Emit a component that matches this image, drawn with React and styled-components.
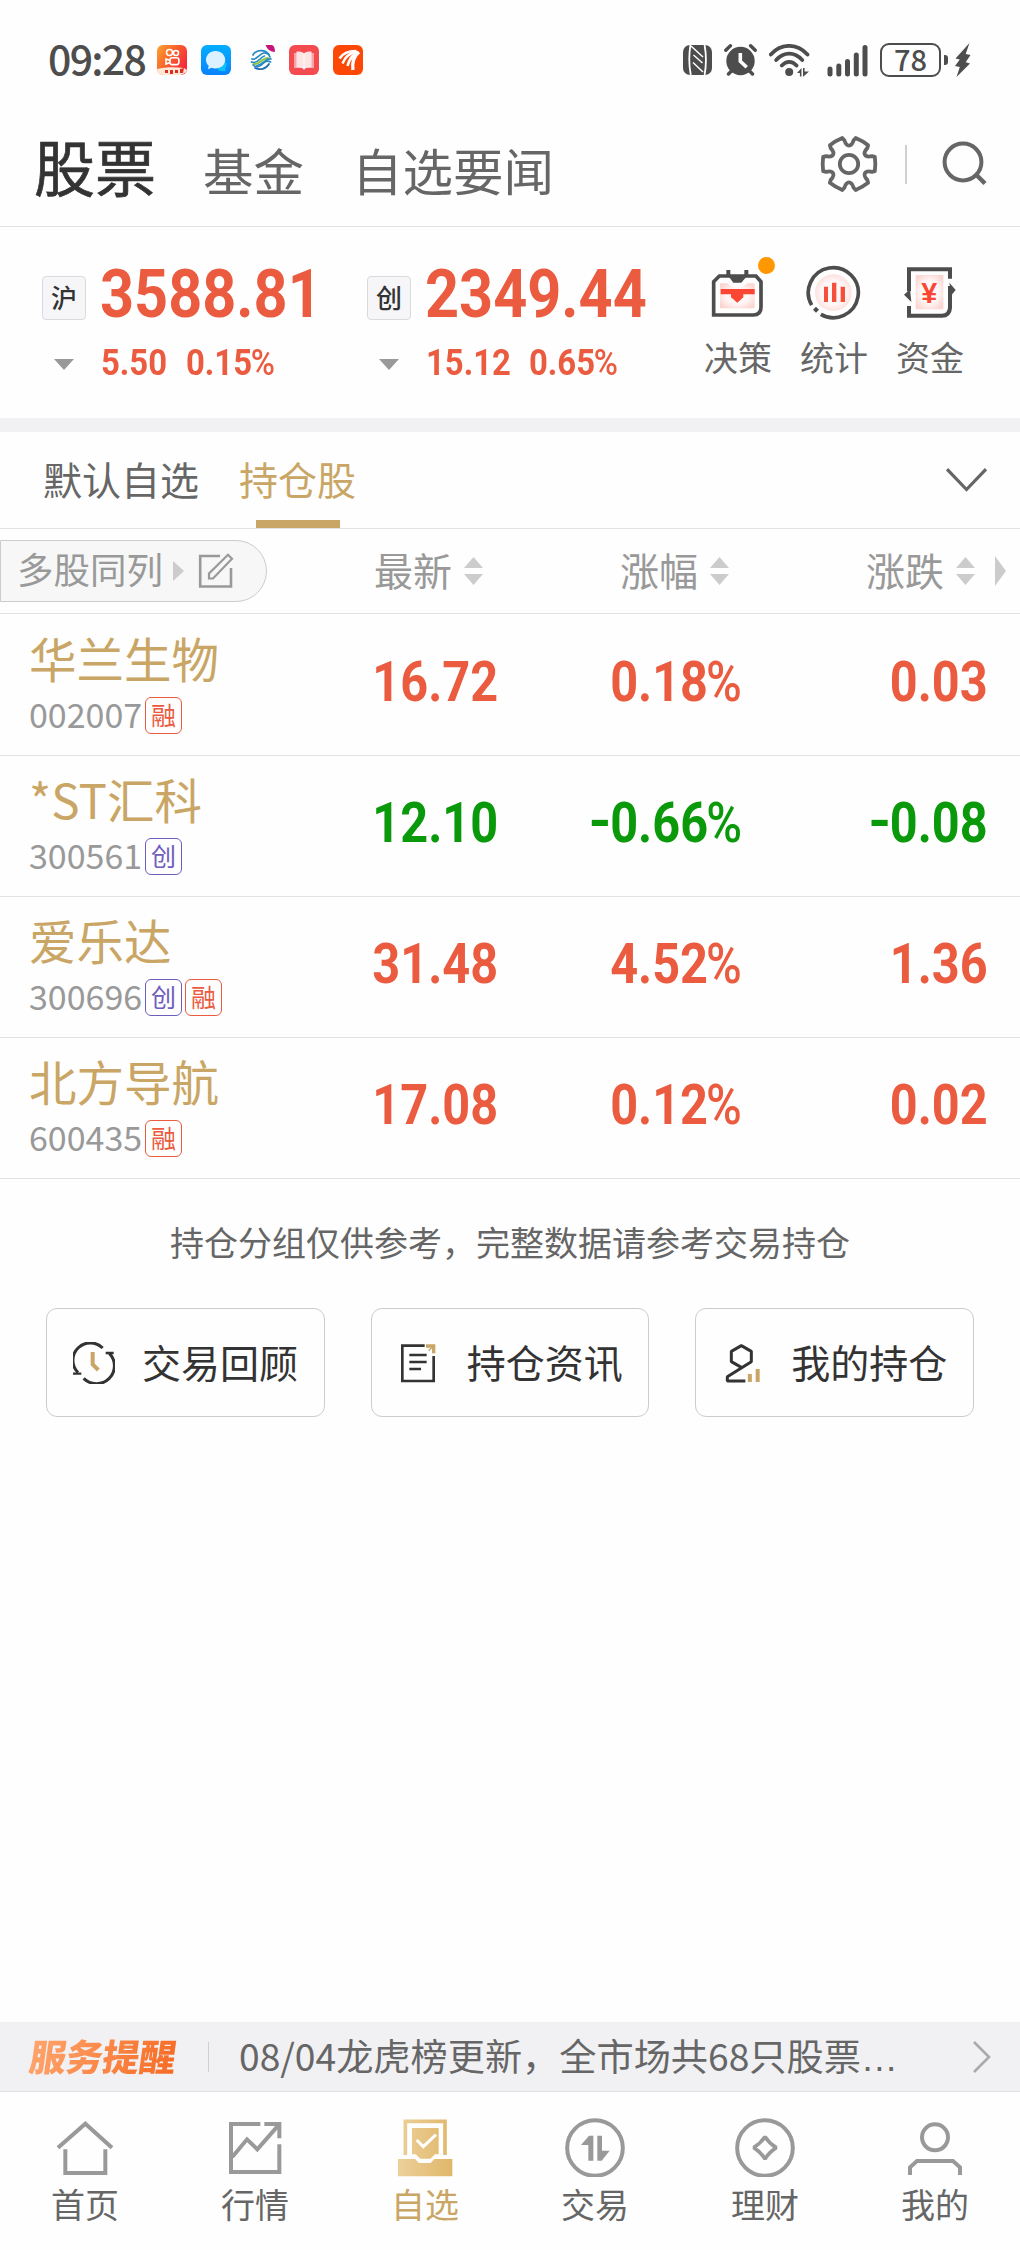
import styled, { createGlobalStyle } from "styled-components";

const colors = {
  black: "#333333",
  darkGray: "#666666",
  gray: "#999999",
  lightGray: "#cccccc",
  line: "#e2e2e2",
  band: "#f1f1f4",
  gold: "#c9a665",
  red: "#ea5b3f",
  green: "#0a990a",
  purple: "#6f5dbd",
  status: "#4d4d4d",
};

const GlobalStyle = createGlobalStyle`
  * {
    box-sizing: border-box;
  }

  body {
    margin: 0;
    background: #fefefe;
    font-family: "Noto Sans CJK SC", sans-serif;
  }

  svg {
    display: block;
    flex: none;
  }
`;

const Page = styled.div`
  display: flex;
  flex-direction: column;
  width: 1020px;
  height: 2250px;
  background: #fefefe;
  overflow: hidden;
  white-space: nowrap;
`;

/* status bar */

const StatusBar = styled.div`
  display: flex;
  align-items: center;
  height: 120px;
  padding: 0 49px 0 48px;
  color: ${colors.status};
`;

const Time = styled.span`
  width: 109px;
  font-size: 41px;
  font-weight: 500;
  line-height: 60px;
  letter-spacing: -1.7px;
  margin-top: -7px;
`;

const AppIcons = styled.div`
  display: flex;
  gap: 14px;
  flex: 1;
`;

const StatusIcons = styled.div`
  display: flex;
  align-items: center;
`;

const StatusIcon = styled.div`
  margin-right: ${({ $gap }) => $gap}px;
`;

const Battery = styled.div`
  width: 61px;
  height: 34px;
  border: 2px solid ${colors.status};
  border-radius: 9px;
  font-size: 29px;
  font-weight: 500;
  line-height: 26px;
  text-align: center;
`;

const BatteryTip = styled.div`
  width: 4px;
  height: 10px;
  margin: 0 7px 0 3px;
  border-radius: 0 3px 3px 0;
  background: ${colors.status};
`;

/* page header */

const Header = styled.header`
  display: flex;
  align-items: center;
  height: 107px;
  padding: 0 32px 0 34px;
  border-bottom: 1px solid ${colors.line};
`;

const HeaderTitle = styled.h1`
  margin: -14px 47px 0 0;
  color: ${colors.black};
  font-size: 61px;
  font-weight: 400;
  line-height: 80px;
  -webkit-text-stroke: 0.7px ${colors.black};
`;

const HeaderTab = styled.span`
  margin: -8px 48px 0 0;
  color: ${colors.darkGray};
  font-size: 50.5px;
  line-height: 80px;
`;

const HeaderTools = styled.div`
  display: flex;
  align-items: center;
  margin: -18px 0 0 auto;
`;

const Divider = styled.div`
  width: ${({ $width }) => $width}px;
  height: ${({ $height }) => $height}px;
  margin: ${({ $margin }) => $margin};
  background: #cfcfcf;
`;

/* indexes */

const IndexSection = styled.section`
  display: flex;
  height: 205px;
  padding-left: 42px;
  border-bottom: 14px solid ${colors.band};
`;

const IndexItem = styled.div`
  width: 325px;
  padding-top: 41px;
`;

const IndexRow = styled.div`
  display: flex;
  align-items: center;
  height: ${({ $height }) => $height}px;
`;

const IndexBadge = styled.span`
  width: 44px;
  height: 44px;
  margin: 6px 14px 0 0;
  border: 1px solid #dadade;
  border-radius: 4px;
  background: #f6f6f9;
  color: ${colors.black};
  font-size: 26px;
  font-weight: 500;
  line-height: 39px;
  text-align: center;
`;

const Digits = styled.span`
  display: inline-block;
  color: ${({ $color }) => $color || colors.red};
  font-family: Roboto, sans-serif;
  font-size: ${({ $size }) => $size}px;
  font-weight: 700;
  line-height: 1;
  transform: scaleX(${({ $scale }) => $scale || 0.9});
  transform-origin: ${({ $origin }) => $origin || "left"} center;
`;

const Minus = styled.span`
  display: inline-block;
  margin-right: -0.03em;
  transform: translateY(-0.03em) scaleX(1.2);
  transform-origin: right center;
`;

const Percent = styled.span`
  margin-left: -0.04em;
  font-weight: 500;
`;

const IndexChange = styled.div`
  width: ${({ $width }) => $width}px;
`;

const Triangle = styled.div`
  width: 20px;
  height: 11px;
  margin: 2px 27px 0 12px;
  background: ${colors.gray};
  clip-path: polygon(0 0, 100% 0, 50% 100%);
`;

const Shortcuts = styled.div`
  display: flex;
  margin-left: -2px;
  padding-top: 35px;
`;

const Shortcut = styled.div`
  display: flex;
  flex-direction: column;
  align-items: center;
  width: 96px;
  color: ${colors.darkGray};
  font-size: 34px;
  line-height: 40px;
`;

const ShortcutIcon = styled.div`
  position: relative;
  margin-bottom: 15px;
`;

const AlertDot = styled.div`
  position: absolute;
  top: -5px;
  left: 50px;
  width: 17px;
  height: 17px;
  border-radius: 50%;
  background: #ff9800;
`;

/* groups */

const Groups = styled.div`
  display: flex;
  height: 97px;
  padding: 0 33px 0 43px;
  border-bottom: 1px solid ${colors.line};
`;

const Group = styled.div`
  display: flex;
  flex-direction: column;
  align-items: center;
  justify-content: space-between;
  margin-right: 40px;
  color: ${({ $active }) => ($active ? colors.gold : colors.darkGray)};
  font-size: 39px;
  line-height: 92px;

  &::after {
    content: "";
    width: 84px;
    height: 8px;
    margin-top: -4px;
    background: ${({ $active }) => ($active ? colors.gold : "transparent")};
  }
`;

const GroupArrow = styled.div`
  margin: 36px 0 0 auto;
`;

/* table */

const TableHead = styled.div`
  display: grid;
  grid-template-columns: 483px 246px 246px 31px;
  align-items: center;
  height: 85px;
  border-bottom: 1px solid ${colors.line};
`;

const HeadFirst = styled.div`
  display: flex;
  align-items: center;
  justify-content: space-between;
`;

const Pill = styled.div`
  display: flex;
  align-items: center;
  width: 267px;
  height: 62px;
  padding-left: 16px;
  border: 1px solid ${colors.lightGray};
  border-radius: 0 31px 31px 0;
  background: #f7f7f7;
  color: ${colors.gray};
  font-size: 36.5px;
  line-height: 58px;
`;

const PillText = styled.span`
  margin-top: -4px;
`;

const ArrowRight = styled.div`
  width: 11px;
  height: ${({ $height }) => $height}px;
  margin: ${({ $margin }) => $margin};
  background: ${colors.lightGray};
  clip-path: polygon(0 0, 100% 50%, 0 100%);
`;

const ColumnTitle = styled.div`
  display: flex;
  align-items: center;
  justify-content: flex-end;
  gap: 12px;
  color: ${colors.gray};
  font-size: 39px;
  line-height: 50px;
`;

const ColumnText = styled.span`
  margin-top: -4px;
`;

const StockList = styled.div`
  padding-top: 1px;
`;

const StockRow = styled.div`
  display: grid;
  grid-template-columns: 1fr 244px 246px;
  height: 141px;
  padding: 0 32px 0 29px;
  border-bottom: 1px solid ${colors.line};
`;

const StockFirst = styled.div`
  display: flex;
  align-items: flex-start;
  justify-content: space-between;
`;

const StockName = styled.div`
  margin-top: 13px;
  color: ${colors.gold};
  font-size: 47.5px;
  line-height: 60px;
`;

const StockCode = styled.div`
  display: flex;
  align-items: center;
  height: 37px;
  margin-top: 9px;
  color: ${colors.gray};
  font-size: 34px;
  line-height: 37px;
`;

const CodeText = styled.span`
  width: 116px;
  margin-top: -4px;
`;

const Tag = styled.span`
  width: 37px;
  height: 37px;
  margin-right: 3px;
  border: 1.5px solid ${({ $color }) => $color};
  border-radius: 6px;
  color: ${({ $color }) => $color};
  font-size: 25px;
  line-height: 32px;
  text-align: center;
`;

const Value = styled.div`
  height: 140px;
  padding-top: 40px;
  text-align: right;
`;

/* holdings actions */

const Note = styled.p`
  margin: 41px 0 0;
  color: ${colors.darkGray};
  font-size: 34px;
  line-height: 44px;
  text-align: center;
`;

const Actions = styled.div`
  display: grid;
  grid-template-columns: repeat(3, 1fr);
  gap: 46px;
  margin-top: 44px;
  padding: 0 46px;
`;

const Action = styled.div`
  display: flex;
  align-items: center;
  height: 109px;
  padding-left: 26px;
  border: 1px solid ${colors.lightGray};
  border-radius: 11px;
  color: ${colors.black};
  font-size: 39px;
  line-height: 50px;
`;

const ActionText = styled.span`
  margin: -4px 0 0 27px;
`;

/* bottom */

const Service = styled.div`
  display: flex;
  align-items: center;
  height: 70px;
  margin-top: auto;
  padding: 0 29px;
  border-bottom: 1px solid #e0e0e2;
  background: ${colors.band};
  color: ${colors.darkGray};
  font-size: 37.2px;
  line-height: 60px;
`;

const ServiceLogo = styled.span`
  width: 147px;
  margin: -4px 0 0 1px;
  background: linear-gradient(100deg, #ffa66e, #f66a22);
  background-clip: text;
  -webkit-background-clip: text;
  color: transparent;
  font-size: 37px;
  font-weight: 900;
  letter-spacing: -0.5px;
  transform: skewX(-8deg);
`;

const ServiceText = styled.span`
  flex: 1;
  margin-top: -1px;
`;

const Ellipsis = styled.span`
  font-family: "Liberation Sans", sans-serif;
`;

const Nav = styled.nav`
  display: grid;
  grid-template-columns: repeat(6, 1fr);
  height: 158px;
  padding-top: 25px;
`;

const NavItem = styled.div`
  display: flex;
  flex-direction: column;
  align-items: center;
  gap: 7px;
  color: ${({ $active }) => ($active ? colors.gold : colors.darkGray)};
  font-size: 34px;
  line-height: 40px;
`;

const Icon = ({ size = 60, box = 180, children, ...rest }) => (
  <svg
    width={size}
    height={size}
    viewBox={`0 0 ${box} ${box}`}
    fill="none"
    {...rest}
  >
    {children}
  </svg>
);

const NfcIcon = () => (
  <svg width="29" height="30" viewBox="0 0 29 30" fill="none">
    <rect width="29" height="30" rx="7" fill={colors.status} />
    <path
      d="M7.4 0C6 9 6 21 7.8 30M21.6 0c1.6 9 1.6 21 0 30"
      stroke="#fefefe"
      strokeWidth="1.8"
    />
    <path
      d="M8 1L20 12M10.5 10L19.5 18M10 17.5L20 27"
      stroke="#fefefe"
      strokeWidth="1.5"
    />
  </svg>
);

const AlarmIcon = () => (
  <svg width="33" height="32" viewBox="0 0 33 32" fill="none">
    <circle cx="16.5" cy="17" r="14.2" fill={colors.status} />
    <path
      d="M1.8 6.2l4.6-4.4M31.2 6.2l-4.6-4.4M4.5 30l3-3M28.5 30l-3-3"
      stroke={colors.status}
      strokeWidth="3.4"
      strokeLinecap="round"
    />
    <path d="M16.3 9v8.2l6.4 6" stroke="#fefefe" strokeWidth="3.6" />
  </svg>
);

const WifiIcon = () => (
  <svg width="41" height="33" viewBox="0 0 41 33" fill="none">
    <path
      d="M1.8 10.5C12 -1 28 -1 38.5 10.5M7.2 16C15 7.6 25.5 7.6 33.2 16M12.8 21.5C17.5 16.6 23 16.6 27.5 21.5"
      stroke={colors.status}
      strokeWidth="3.8"
      strokeLinecap="round"
    />
    <circle cx="20.2" cy="28" r="4" fill={colors.status} />
    <path
      d="M28 29l4.5-5v8.5h-1.6V29zM34 24h1.6v3.5H40L34.5 32.5H34z"
      fill={colors.status}
    />
  </svg>
);

const SignalIcon = () => (
  <svg width="41" height="33" viewBox="0 0 41 33" fill={colors.status}>
    <rect x="0.5" y="22.5" width="5" height="10" rx="2.5" />
    <rect x="9.3" y="19.5" width="5" height="13" rx="2.5" />
    <rect x="18" y="15" width="5" height="17.5" rx="2.5" />
    <rect x="26.8" y="8.5" width="5" height="24" rx="2.5" />
    <rect x="35.5" y="1" width="5" height="31.5" rx="2.5" />
  </svg>
);

const BoltIcon = () => (
  <svg width="16" height="34" viewBox="0 0 16 34">
    <path
      d="M14.5 0L.5 15.500l4.300 1L0 23l4.800 1L1.500 34 15 20.500l-4.300-1.300L15.500 12l-4.800-1z"
      fill={colors.status}
    />
  </svg>
);

const KuaishouIcon = () => (
  <Icon size={30} box={30}>
    <defs>
      <linearGradient id="ks" x1="0" y1="0" x2="1" y2="0.6">
        <stop offset="0" stopColor="#fba42e" />
        <stop offset="0.5" stopColor="#f9622c" />
        <stop offset="1" stopColor="#f5283c" />
      </linearGradient>
    </defs>
    <rect width="30" height="30" rx="6" fill="url(#ks)" />
    <g stroke="#fff" strokeWidth="1.6">
      <circle cx="12.5" cy="7.5" r="3" />
      <circle cx="19" cy="8" r="2.5" />
      <rect x="13" y="12.8" width="8.8" height="6.8" rx="2" />
      <path d="M13 15.5l-4-1.5v5l4-1.5" />
    </g>
    <path d="M0 24c8-2 18-2 27-1l3 2-2 3-4 2H6c-4 0-6-3-6-6z" fill="#ffe6d5" />
    <path
      d="M8 25h3v3H8zM13 25h3v4h-3zM18 25h3v3h-3zM23 24l4-1-1 5h-3z"
      fill="#e02c20"
    />
  </Icon>
);

const MessageIcon = () => (
  <Icon size={30} box={30}>
    <defs>
      <linearGradient id="msg" x1="0" y1="0" x2="0" y2="1">
        <stop offset="0" stopColor="#04aeff" />
        <stop offset="1" stopColor="#0a82fb" />
      </linearGradient>
    </defs>
    <rect width="30" height="30" rx="6" fill="url(#msg)" />
    <path d="M25 17c1 3 .5 5-1 6.5l1 2.5c-4 .5-7 0-8.5-2z" fill="#0cc3f8" />
    <path
      d="M14.5 6C20 6 24.2 10 24.2 14.8S20 23.6 14.5 23.6c-1.5 0-3-.3-4-.8L7 24.2l.7-3.5C5.9 19.2 5 17 5 14.8 5 10 9 6 14.5 6z"
      fill="#dcf1ff"
    />
  </Icon>
);

const MobileIcon = () => (
  <Icon size={30} box={30}>
    <g strokeWidth="1.7" strokeLinecap="round">
      <path d="M8 10C11 4.5 20 4 24 9.5" stroke="#2589c4" />
      <path d="M7 14c4 2 8-6 12-6 3 0 5 1 6 4" stroke="#2589c4" />
      <path d="M6.5 17c6 3 9-5.5 13-6" stroke="#2589c4" />
      <path d="M9 19c5 1 8-6 14-6" stroke="#8cc541" strokeWidth="2.2" />
      <path d="M26 14c-6-1-8 6-14 6.5" stroke="#2589c4" />
      <path d="M8 20c3 3 7 2 10-1.5 2-2 5-3 7.5-1.5" stroke="#2589c4" />
      <path d="M10 23c5 2.5 11 1 14-4" stroke="#1f6cae" />
    </g>
    <path d="M20.5 0H27q3 1 3 7-7 0-9.5-7z" fill="#c4157c" />
  </Icon>
);

const BookIcon = () => (
  <Icon size={30} box={30}>
    <rect width="30" height="30" rx="6" fill="#f44b50" />
    <path d="M5 8h20v15H5z" fill="#f9a5a8" />
    <path
      d="M7.5 6.5c3 0 5.5 0 7.5 2 2-2 4.5-2 7.5-2v16c-3 0-5.5 0-7.5 2-2-2-4.5-2-7.5-2z"
      fill="#fde3e4"
    />
    <path d="M15 8.5v16" stroke="#fff" />
  </Icon>
);

const WingIcon = () => (
  <Icon size={30} box={30}>
    <rect width="30" height="30" rx="6" fill="#fd4705" />
    <g stroke="#fff" strokeWidth="2.6">
      <path d="M6.5 13.5C10 8 16 6 23 6" />
      <path d="M9.5 18.5C12 12 17 8 24 6.5" />
      <path d="M14.5 21C16 15 19 10 25 7" />
      <path d="M20 25C19 18 21 11 26 7" strokeWidth="3.4" />
    </g>
  </Icon>
);

// six-tooth outline, built around the origin
const polar = (deg, r) => {
  const a = (deg * Math.PI) / 180;
  return `${(r * Math.cos(a)).toFixed(2)} ${(r * Math.sin(a)).toFixed(2)}`;
};

const gear = [0, 60, 120, 180, 240, 300]
  .map(
    (t) =>
      `${t ? "L" : "M"}${polar(t - 15.5, 26.8)}Q${polar(t, 26.8)} ${polar(t + 15.5, 26.8)}` +
      `L${polar(t + 19, 24.2)}C${polar(t + 22, 16.8)} ${polar(t + 38, 16.8)} ${polar(t + 41, 24.2)}`
  )
  .join("");

const GearIcon = () => (
  <svg
    width="58"
    height="58"
    viewBox="-29 -29 58 58"
    fill="none"
    stroke={colors.darkGray}
    strokeWidth="3.8"
    strokeLinejoin="round"
  >
    <path d={`${gear}Z`} />
    <circle r="9.2" />
  </svg>
);

const SearchIcon = () => (
  <svg
    width="46"
    height="46"
    viewBox="0 0 46 46"
    fill="none"
    stroke={colors.darkGray}
    strokeWidth="4"
  >
    <circle cx="21" cy="21" r="18.4" />
    <path d="M33 32.5L43 42.5" strokeWidth="4.4" />
  </svg>
);

const Glow = ({ id }) => (
  <defs>
    <radialGradient id={id} cx="0.5" cy="0.5" r="0.6">
      <stop offset="0.55" stopColor="#fff6f5" />
      <stop offset="1" stopColor="#fbd5d1" />
    </radialGradient>
  </defs>
);

const DecisionIcon = () => (
  <Icon>
    <Glow id="glow1" />
    <path
      d="M17 159V59L34 42H144L159 59V136Q159 159 136 159Z"
      stroke={colors.status}
      strokeWidth="11"
    />
    <path d="M61 24V44M115 24V44" stroke={colors.status} strokeWidth="12" />
    <path d="M61 42H117L100 62H76Z" fill={colors.status} />
    <path d="M36 64H58L74 76H102L118 64H140V139H36Z" fill="url(#glow1)" />
    <path d="M38 81H140V97H106V106L88 122L69 106V97H38Z" fill="#fb4634" />
  </Icon>
);

const StatsIcon = () => (
  <Icon>
    <Glow id="glow2" />
    <circle cx="88" cy="92" r="55" fill="url(#glow2)" />
    <path
      d="M23 129.5A75 75 0 1 1 50.5 157"
      stroke={colors.status}
      strokeWidth="11"
    />
    <path d="M36 134L45 143L36 152L27 143Z" fill={colors.status} />
    <path d="M60 74H72V120H60ZM84 62H97V120H84ZM110 74H123V120H110Z" fill="#f4503c" />
  </Icon>
);

const FundIcon = () => (
  <Icon>
    <Glow id="glow3" />
    <path d="M47 39H130V142H47Z" fill="url(#glow3)" />
    <path
      d="M27 88V22H150V50M150 72V138Q148 161 126 161H27V132"
      stroke={colors.status}
      strokeWidth="12"
    />
    <path d="M148 62L167 84L154 100ZM30 82L12 98L34 120Z" fill={colors.status} />
    <text
      x="88"
      y="122"
      fill="#fb4634"
      fontFamily="Liberation Sans, sans-serif"
      fontSize="86"
      fontWeight="700"
      textAnchor="middle"
    >
      ¥
    </text>
  </Icon>
);

const ChevronDown = () => (
  <svg width="41" height="24" viewBox="0 0 41 24" fill="none">
    <path d="M1 1.2L20.5 21.5L40 1.2" stroke={colors.darkGray} strokeWidth="3.2" />
  </svg>
);

const ChevronRight = () => (
  <svg width="18" height="32" viewBox="0 0 18 32" fill="none">
    <path d="M1 1L16 16L1 31" stroke="#aaaaaa" strokeWidth="2.6" />
  </svg>
);

const EditIcon = () => (
  <svg
    width="36"
    height="36"
    viewBox="0 0 36 36"
    fill="none"
    stroke={colors.gray}
    strokeWidth="2.6"
  >
    <path d="M22 3H2.2V33.5H33V15" />
    <path d="M11 25.5V20.5L30 1.8L34 5.8L15 25.5Z" strokeWidth="2.2" />
  </svg>
);

const SortIcon = () => (
  <svg width="19" height="28" viewBox="0 0 19 28" fill={colors.lightGray}>
    <path d="M9.5 0L19 11H0ZM0 17H19L9.5 28Z" />
  </svg>
);

const ReviewIcon = () => (
  <Icon size={42} box={126} stroke={colors.black} strokeWidth="9">
    <path d="M89 18A52 52 0 0 0 15 92M109 34A52 52 0 0 1 32 109" />
    <path d="M0 95H25M98 33H122" strokeWidth="7" />
    <path d="M59 30V67L76 84" stroke={colors.gold} strokeWidth="12" />
  </Icon>
);

const NewsIcon = () => (
  <Icon size={42} box={126} stroke={colors.black} strokeWidth="8">
    <path d="M80 11H13V117H107V42" />
    <path d="M34 39H86M34 60H86M34 81H69" strokeWidth="7" />
    <path d="M84 12H107V34" stroke={colors.gold} strokeWidth="10" />
    <path d="M92 26L107 11" stroke={colors.gold} strokeWidth="4" />
  </Icon>
);

const HoldingIcon = () => (
  <Icon size={42} box={126} stroke={colors.black} strokeWidth="9">
    <path
      d="M58 76L28 59V28L58 11L88 28V59L16 104V117H70"
      strokeLinejoin="bevel"
    />
    <path d="M83.5 96V120M107 81V120" stroke={colors.gold} strokeWidth="12" />
  </Icon>
);

const HomeIcon = () => (
  <Icon stroke={colors.gray} strokeWidth="12">
    <path d="M9 92L91 20L171 92M31 97V168H151V97" />
  </Icon>
);

const MarketIcon = () => (
  <Icon stroke={colors.gray} strokeWidth="12">
    <path d="M106 21H18V165H163V82" />
    <path d="M22 120L66 67L97 97L160 25M118 21H163V64" />
  </Icon>
);

const WatchIcon = () => (
  <Icon>
    <defs>
      <linearGradient id="watch" gradientUnits="userSpaceOnUse" x1="9" y1="0" x2="172" y2="0">
        <stop offset="0" stopColor="#ecd09a" />
        <stop offset="1" stopColor="#e0b76a" />
      </linearGradient>
    </defs>
    <path d="M31 114V13H150V114" stroke="url(#watch)" strokeWidth="11" />
    <path d="M51 33H131V112H120L106 125H76L62 112H51Z" fill="url(#watch)" />
    <path d="M9 126H60L72 138H107L118 126H172V178H9Z" fill="url(#watch)" />
    <path d="M65 69L85 89L123 53" stroke="#fff" strokeWidth="9" />
  </Icon>
);

const TradeIcon = () => (
  <Icon>
    <circle cx="90" cy="93" r="83.5" stroke={colors.gray} strokeWidth="12" />
    <path
      d="M48 84L72 56H85V131H70V84ZM97 56H111V101H134L110 131H97Z"
      fill={colors.gray}
    />
  </Icon>
);

const WealthIcon = () => (
  <Icon stroke={colors.gray} strokeWidth="12">
    <circle cx="90" cy="93" r="83.5" />
    <path
      d="M90 59Q103 79 124 92Q103 105 90 126Q77 105 56 92Q77 79 90 59Z"
      strokeWidth="11"
      strokeLinejoin="bevel"
    />
  </Icon>
);

const MineIcon = () => (
  <Icon stroke={colors.gray} strokeWidth="12">
    <circle cx="90" cy="61" r="39" />
    <path d="M15 174V151L36 132H144L165 151V174" />
  </Icon>
);

const indexes = [
  { badge: "沪", value: "3588.81", change: "5.50", rate: "0.15", offset: 85 },
  { badge: "创", value: "2349.44", change: "15.12", rate: "0.65", offset: 103 },
];

const stocks = [
  { name: "华兰生物", code: "002007", tags: ["融"], price: "16.72", rate: "0.18", change: "0.03" },
  { name: "*ST汇科", code: "300561", tags: ["创"], price: "12.10", rate: "0.66", change: "0.08", down: true },
  { name: "爱乐达", code: "300696", tags: ["创", "融"], price: "31.48", rate: "4.52", change: "1.36" },
  { name: "北方导航", code: "600435", tags: ["融"], price: "17.08", rate: "0.12", change: "0.02" },
];

const tagColors = { 融: colors.red, 创: colors.purple };

const actions = [
  { icon: ReviewIcon, text: "交易回顾" },
  { icon: NewsIcon, text: "持仓资讯" },
  { icon: HoldingIcon, text: "我的持仓" },
];

const navItems = [
  { icon: HomeIcon, text: "首页" },
  { icon: MarketIcon, text: "行情" },
  { icon: WatchIcon, text: "自选", active: true },
  { icon: TradeIcon, text: "交易" },
  { icon: WealthIcon, text: "理财" },
  { icon: MineIcon, text: "我的" },
];

const Column = ({ title }) => (
  <ColumnTitle>
    <ColumnText>{title}</ColumnText>
    <SortIcon />
  </ColumnTitle>
);

const StockValue = ({ down, signed, children }) => (
  <Value>
    <Digits
      $size={55}
      $scale={0.885}
      $origin="right"
      $color={down ? colors.green : colors.red}
    >
      {signed && down && <Minus>-</Minus>}
      {children}
    </Digits>
  </Value>
);

const Stock = ({ stock }) => (
  <StockRow>
    <StockFirst>
      <div>
        <StockName>{stock.name}</StockName>
        <StockCode>
          <CodeText>{stock.code}</CodeText>
          {stock.tags.map((tag) => (
            <Tag key={tag} $color={tagColors[tag]}>
              {tag}
            </Tag>
          ))}
        </StockCode>
      </div>
      <StockValue down={stock.down}>{stock.price}</StockValue>
    </StockFirst>
    <StockValue down={stock.down} signed>
      {stock.rate}
      <Percent>%</Percent>
    </StockValue>
    <StockValue down={stock.down} signed>
      {stock.change}
    </StockValue>
  </StockRow>
);

const App = () => {
  return (
    <Page>
      <GlobalStyle />

      <StatusBar>
        <Time>09:28</Time>
        <AppIcons>
          <KuaishouIcon />
          <MessageIcon />
          <MobileIcon />
          <BookIcon />
          <WingIcon />
        </AppIcons>
        <StatusIcons>
          <StatusIcon $gap={12}>
            <NfcIcon />
          </StatusIcon>
          <StatusIcon $gap={12}>
            <AlarmIcon />
          </StatusIcon>
          <StatusIcon $gap={17}>
            <WifiIcon />
          </StatusIcon>
          <StatusIcon $gap={12}>
            <SignalIcon />
          </StatusIcon>
          <Battery>78</Battery>
          <BatteryTip />
          <BoltIcon />
        </StatusIcons>
      </StatusBar>

      <Header>
        <HeaderTitle>股票</HeaderTitle>
        <HeaderTab>基金</HeaderTab>
        <HeaderTab>自选要闻</HeaderTab>
        <HeaderTools>
          <GearIcon />
          <Divider $width={2} $height={39} $margin="0 35px 0 27px" />
          <SearchIcon />
        </HeaderTools>
      </Header>

      <IndexSection>
        {indexes.map((item) => (
          <IndexItem key={item.badge}>
            <IndexRow $height={54}>
              <IndexBadge>{item.badge}</IndexBadge>
              <Digits $size={66}>{item.value}</Digits>
            </IndexRow>
            <IndexRow $height={83}>
              <Triangle />
              <IndexChange $width={item.offset}>
                <Digits $size={36.5}>{item.change}</Digits>
              </IndexChange>
              <Digits $size={36.5}>
                {item.rate}
                <Percent>%</Percent>
              </Digits>
            </IndexRow>
          </IndexItem>
        ))}
        <Shortcuts>
          <Shortcut>
            <ShortcutIcon>
              <DecisionIcon />
              <AlertDot />
            </ShortcutIcon>
            决策
          </Shortcut>
          <Shortcut>
            <ShortcutIcon>
              <StatsIcon />
            </ShortcutIcon>
            统计
          </Shortcut>
          <Shortcut>
            <ShortcutIcon>
              <FundIcon />
            </ShortcutIcon>
            资金
          </Shortcut>
        </Shortcuts>
      </IndexSection>

      <Groups>
        <Group>默认自选</Group>
        <Group $active>持仓股</Group>
        <GroupArrow>
          <ChevronDown />
        </GroupArrow>
      </Groups>

      <TableHead>
        <HeadFirst>
          <Pill>
            <PillText>多股同列</PillText>
            <ArrowRight $height={20} $margin="0 14px 0 10px" />
            <EditIcon />
          </Pill>
          <Column title="最新" />
        </HeadFirst>
        <Column title="涨幅" />
        <Column title="涨跌" />
        <ArrowRight $height={30} $margin="0 0 0 20px" />
      </TableHead>

      <StockList>
        {stocks.map((stock) => (
          <Stock key={stock.code} stock={stock} />
        ))}
      </StockList>

      <Note>持仓分组仅供参考，完整数据请参考交易持仓</Note>

      <Actions>
        {actions.map(({ icon: ActionIcon, text }) => (
          <Action key={text}>
            <ActionIcon />
            <ActionText>{text}</ActionText>
          </Action>
        ))}
      </Actions>

      <Service>
        <ServiceLogo>服务提醒</ServiceLogo>
        <Divider $width={1} $height={30} $margin="0 30px 0 31px" />
        <ServiceText>
          08/04龙虎榜更新，全市场共68只股票<Ellipsis>…</Ellipsis>
        </ServiceText>
        <ChevronRight />
      </Service>

      <Nav>
        {navItems.map(({ icon: NavIcon, text, active }) => (
          <NavItem key={text} $active={active}>
            <NavIcon />
            {text}
          </NavItem>
        ))}
      </Nav>
    </Page>
  );
};

export default App;
